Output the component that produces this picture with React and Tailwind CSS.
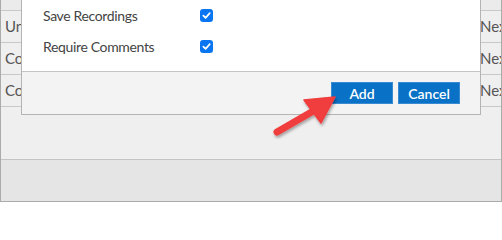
import React from "react";

const rows = [
  { l: "Un", r: "Nex" },
  { l: "Co", r: "Nex" },
  { l: "Co", r: "Nex" },
];

function Check() {
  return (
    <span className="flex h-[13px] w-[13px] items-center justify-center rounded-[3px] bg-[#0a75f0]">
      <svg width="9" height="9" viewBox="0 0 10 10">
        <path d="M1.5 5.2 L4 7.6 L8.6 2.4" fill="none" stroke="white" strokeWidth="1.9" strokeLinecap="round" strokeLinejoin="round" />
      </svg>
    </span>
  );
}

export default function App() {
  return (
    <div
      className="relative h-[202px] w-[502px] overflow-hidden border-x border-b border-[#ababab] bg-[#efefef] text-[#555]"
      style={{ fontFamily: "Lato, 'Open Sans', sans-serif" }}
    >
      <div className="flex h-[159px] flex-col">
        <div className="h-[11px] border-b border-[#c8c8c8] bg-[#ebebeb]" />
        {rows.map((r, i) => (
          <div key={i} className="flex h-[32px] items-center justify-between border-b border-[#c8c8c8] bg-[#efefef] pl-[4px] text-[15px]">
            <span>{r.l}</span>
            <span className="w-[21px] overflow-hidden whitespace-nowrap">{r.r}</span>
          </div>
        ))}
      </div>
      <div className="h-[42px] border-t border-[#c4c4c4] bg-[#e5e5e5]" />

      <div className="absolute left-[20px] top-0 flex w-[460px] flex-col border-x border-b border-[#b4b4b4]">
        <div className="flex h-[71px] flex-col bg-white pl-[21px] text-[14px] tracking-[-0.35px] text-[#444]">
          <div className="flex h-[31px] items-center">
            <span className="w-[157px]">Save Recordings</span>
            <Check />
          </div>
          <div className="flex h-[31px] items-center">
            <span className="w-[157px]">Require Comments</span>
            <Check />
          </div>
        </div>
        <div className="flex h-[43px] items-center justify-end gap-[5px] border-t border-[#c4c4c4] bg-[#f3f3f3] pr-[20px]">
          <button className="h-[22px] w-[62px] border border-[#3a8ad2] bg-[#0a72c6] text-[14px] font-semibold text-white">Add</button>
          <button className="h-[22px] w-[62px] border border-[#3a8ad2] bg-[#0a72c6] text-[14px] font-semibold text-white">Cancel</button>
        </div>
      </div>

      <svg className="pointer-events-none absolute left-0 top-0" width="502" height="202" viewBox="0 0 502 202">
        <defs>
          <filter id="sh" x="-20%" y="-20%" width="140%" height="140%">
            <feDropShadow dx="1" dy="2" stdDeviation="1.5" floodColor="#000" floodOpacity="0.35" />
          </filter>
        </defs>
        <g filter="url(#sh)">
          <line x1="276" y1="132" x2="314" y2="110" stroke="#f03c3c" strokeWidth="7" strokeLinecap="round" />
          <polygon points="334,97 303,100 320,123" fill="#f03c3c" stroke="#f03c3c" strokeWidth="1.5" strokeLinejoin="round" />
        </g>
      </svg>
    </div>
  );
}
